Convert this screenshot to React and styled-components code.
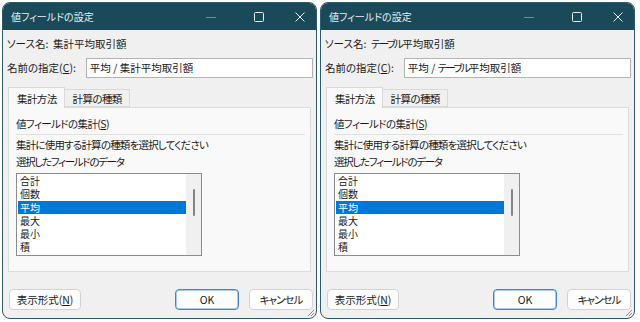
import React from "react";
import styled, { createGlobalStyle } from "styled-components";

const GlobalStyle = createGlobalStyle`
  html, body {
    margin: 0;
    padding: 0;
    background: #ffffff;
  }
  body {
    font-family: "Noto Sans CJK JP", "Noto Sans", sans-serif;
    font-feature-settings: "palt";
    color: #1b1b1b;
  }
`;

const Page = styled.div`
  width: 640px;
  height: 322px;
  display: flex;
  gap: 3px;
  padding: 2px 0 0 2px;
  box-sizing: border-box;
`;

const Dialog = styled.div`
  position: relative;
  width: 315px;
  height: 317px;
  box-sizing: border-box;
  display: flex;
  flex-direction: column;
  border: 1px solid #2f5a69;
  border-radius: 8px;
  overflow: hidden;
  background: #f0f0f0;
`;

const TitleBar = styled.div`
  height: 27px;
  flex: none;
  display: flex;
  align-items: center;
  background: #1a4a5a;
  color: #e6eef0;
  font-size: 10px;
  padding-left: 8px;
`;

const TitleText = styled.div`
  flex: 1;
  line-height: 14px;
`;

const Control = styled.div`
  display: flex;
  align-items: center;
  justify-content: center;
  width: 12px;
  height: 12px;
  margin-right: ${(p) => p.$gap}px;
`;

const Body = styled.div`
  flex: 1;
  display: flex;
  flex-direction: column;
  padding: 7px 3px 0 4px;
  font-size: 10.5px;
`;

const Line = styled.div`
  line-height: 14px;
  height: 14px;
  white-space: nowrap;
  letter-spacing: ${(p) => p.$ls || 0}px;
  margin-top: ${(p) => p.$top || 0}px;
`;

const Kana = styled.span`
  letter-spacing: ${(p) => p.$ls}px;
`;

const NameRow = styled.div`
  display: flex;
  align-items: center;
  gap: 10px;
  margin-top: 7px;
`;

const TextBox = styled.div`
  flex: 1;
  height: 20px;
  box-sizing: border-box;
  border: 1px solid #b4b4b4;
  background: #ffffff;
  padding: 0 3px;
  line-height: 18px;
  white-space: nowrap;
`;

const Tabs = styled.div`
  display: flex;
  align-items: flex-end;
  margin: 9px 2px 0 1px;
  height: 20px;
`;

const Tab = styled.div`
  box-sizing: border-box;
  height: ${(p) => (p.$active ? 21 : 18)}px;
  margin-bottom: ${(p) => (p.$active ? -1 : 0)}px;
  padding: 0 7px 0 8px;
  letter-spacing: -0.6px;
  display: flex;
  align-items: center;
  background: ${(p) => (p.$active ? "#f9f9f9" : "#f0f0f0")};
  border: 1px solid #d9d9d9;
  border-bottom: ${(p) => (p.$active ? "none" : "1px solid #d9d9d9")};
  border-left: ${(p) => (p.$first ? "1px solid #d9d9d9" : "none")};
  position: relative;
  z-index: ${(p) => (p.$active ? 1 : 0)};
`;

const Panel = styled.div`
  height: 165px;
  box-sizing: border-box;
  margin: 0 2px 0 1px;
  background: #f9f9f9;
  border: 1px solid #dcdcdc;
  padding: 9px 5px 0 7px;
  display: flex;
  flex-direction: column;
`;

const Separator = styled.div`
  height: 1px;
  background: #e0e0e0;
  margin: 3px 0 3px 0;
`;

const ListBox = styled.div`
  width: 186px;
  height: 83px;
  box-sizing: border-box;
  margin-top: 4px;
  border: 1px solid #8c8c8c;
  background: #ffffff;
  display: flex;
`;

const Items = styled.div`
  flex: 1;
  padding: 0 0 0 1px;
`;

const Item = styled.div`
  height: 13.3px;
  line-height: 13px;
  font-size: 10px;
  padding-left: 2px;
  color: ${(p) => (p.$selected ? "#ffffff" : "#1b1b1b")};
  background: ${(p) => (p.$selected ? "#0078d7" : "transparent")};
`;

const ScrollTrack = styled.div`
  width: 15px;
  background: #f0f0f0;
  display: flex;
  justify-content: center;
  padding-top: 15px;
`;

const Thumb = styled.div`
  width: 2px;
  height: 27px;
  border-radius: 1px;
  background: #858585;
`;

const Footer = styled.div`
  display: flex;
  align-items: center;
  gap: 10px;
  margin-top: 17px;
  padding-left: 2px;
`;

const Button = styled.div`
  box-sizing: border-box;
  width: ${(p) => p.$w}px;
  height: 21px;
  display: flex;
  align-items: center;
  justify-content: center;
  background: #fdfdfd;
  border: 1px solid ${(p) => (p.$primary ? "#3f86cf" : "#d2d2d2")};
  box-shadow: ${(p) => (p.$primary ? "inset 0 0 0 1px #a9cbee" : "none")};
  border-radius: 4px;
  margin-left: ${(p) => (p.$push ? "auto" : "0")};
  letter-spacing: ${(p) => p.$ls || 0}px;
`;

const Mn = styled.span`
  text-decoration: underline;
  text-underline-offset: 1px;
`;

const Grip = styled.svg`
  position: absolute;
  right: 1px;
  bottom: 1px;
`;

const items = ["合計", "個数", "平均", "最大", "最小", "積"];

function Source({ kana, kanji }) {
  return (
    <>
      {kana && <Kana $ls={-1.8}>{kana}</Kana>}
      {kanji}
    </>
  );
}

function FieldDialog({ kana, kanji }) {
  return (
    <Dialog>
      <TitleBar>
        <TitleText>値フィールドの設定</TitleText>
        <Control $gap={36}>
          <svg width="12" height="12" viewBox="0 0 12 12">
            <path d="M1 6.5h10" stroke="#6f8e98" strokeWidth="1" />
          </svg>
        </Control>
        <Control $gap={29}>
          <svg width="12" height="12" viewBox="0 0 12 12">
            <rect x="1.5" y="1.5" width="9" height="9" rx="1" fill="none" stroke="#e8eef0" strokeWidth="1" />
          </svg>
        </Control>
        <Control $gap={10}>
          <svg width="12" height="12" viewBox="0 0 12 12">
            <path d="M1.5 1.5l9 9M10.5 1.5l-9 9" stroke="#e8eef0" strokeWidth="1" />
          </svg>
        </Control>
      </TitleBar>
      <Body>
        <Line>
          ソース名:&nbsp; <Source kana={kana} kanji={kanji} />
        </Line>
        <NameRow>
          <Line>
            名前の指定(<Mn>C</Mn>):
          </Line>
          <TextBox>
            平均 / <Source kana={kana} kanji={kanji} />
          </TextBox>
        </NameRow>
        <Tabs>
          <Tab $active $first>集計方法</Tab>
          <Tab>計算の種類</Tab>
        </Tabs>
        <Panel>
          <Line $ls={-0.6}>
            値フィールドの集計(<Mn>S</Mn>)
          </Line>
          <Separator />
          <Line $ls={-0.8}>集計に使用する計算の種類を選択してください</Line>
          <Line $ls={-1.3} $top={3}>
            選択したフィールドのデータ
          </Line>
          <ListBox>
            <Items>
              {items.map((it) => (
                <Item key={it} $selected={it === "平均"}>
                  {it}
                </Item>
              ))}
            </Items>
            <ScrollTrack>
              <Thumb />
            </ScrollTrack>
          </ListBox>
        </Panel>
        <Footer>
          <Button $w={72}>
            表示形式(<Mn>N</Mn>)
          </Button>
          <Button $w={64} $primary $push>
            OK
          </Button>
          <Button $w={64} $ls={-1}>
            キャンセル
          </Button>
        </Footer>
      </Body>
      <Grip width="9" height="9" viewBox="0 0 9 9">
        <path d="M8 2L2 8M8 5L5 8" stroke="#8a8a8a" strokeWidth="1" />
      </Grip>
    </Dialog>
  );
}

export default function App() {
  return (
    <>
      <GlobalStyle />
      <Page>
        <FieldDialog kanji="集計平均取引額" />
        <FieldDialog kana="テーブル" kanji="平均取引額" />
      </Page>
    </>
  );
}
